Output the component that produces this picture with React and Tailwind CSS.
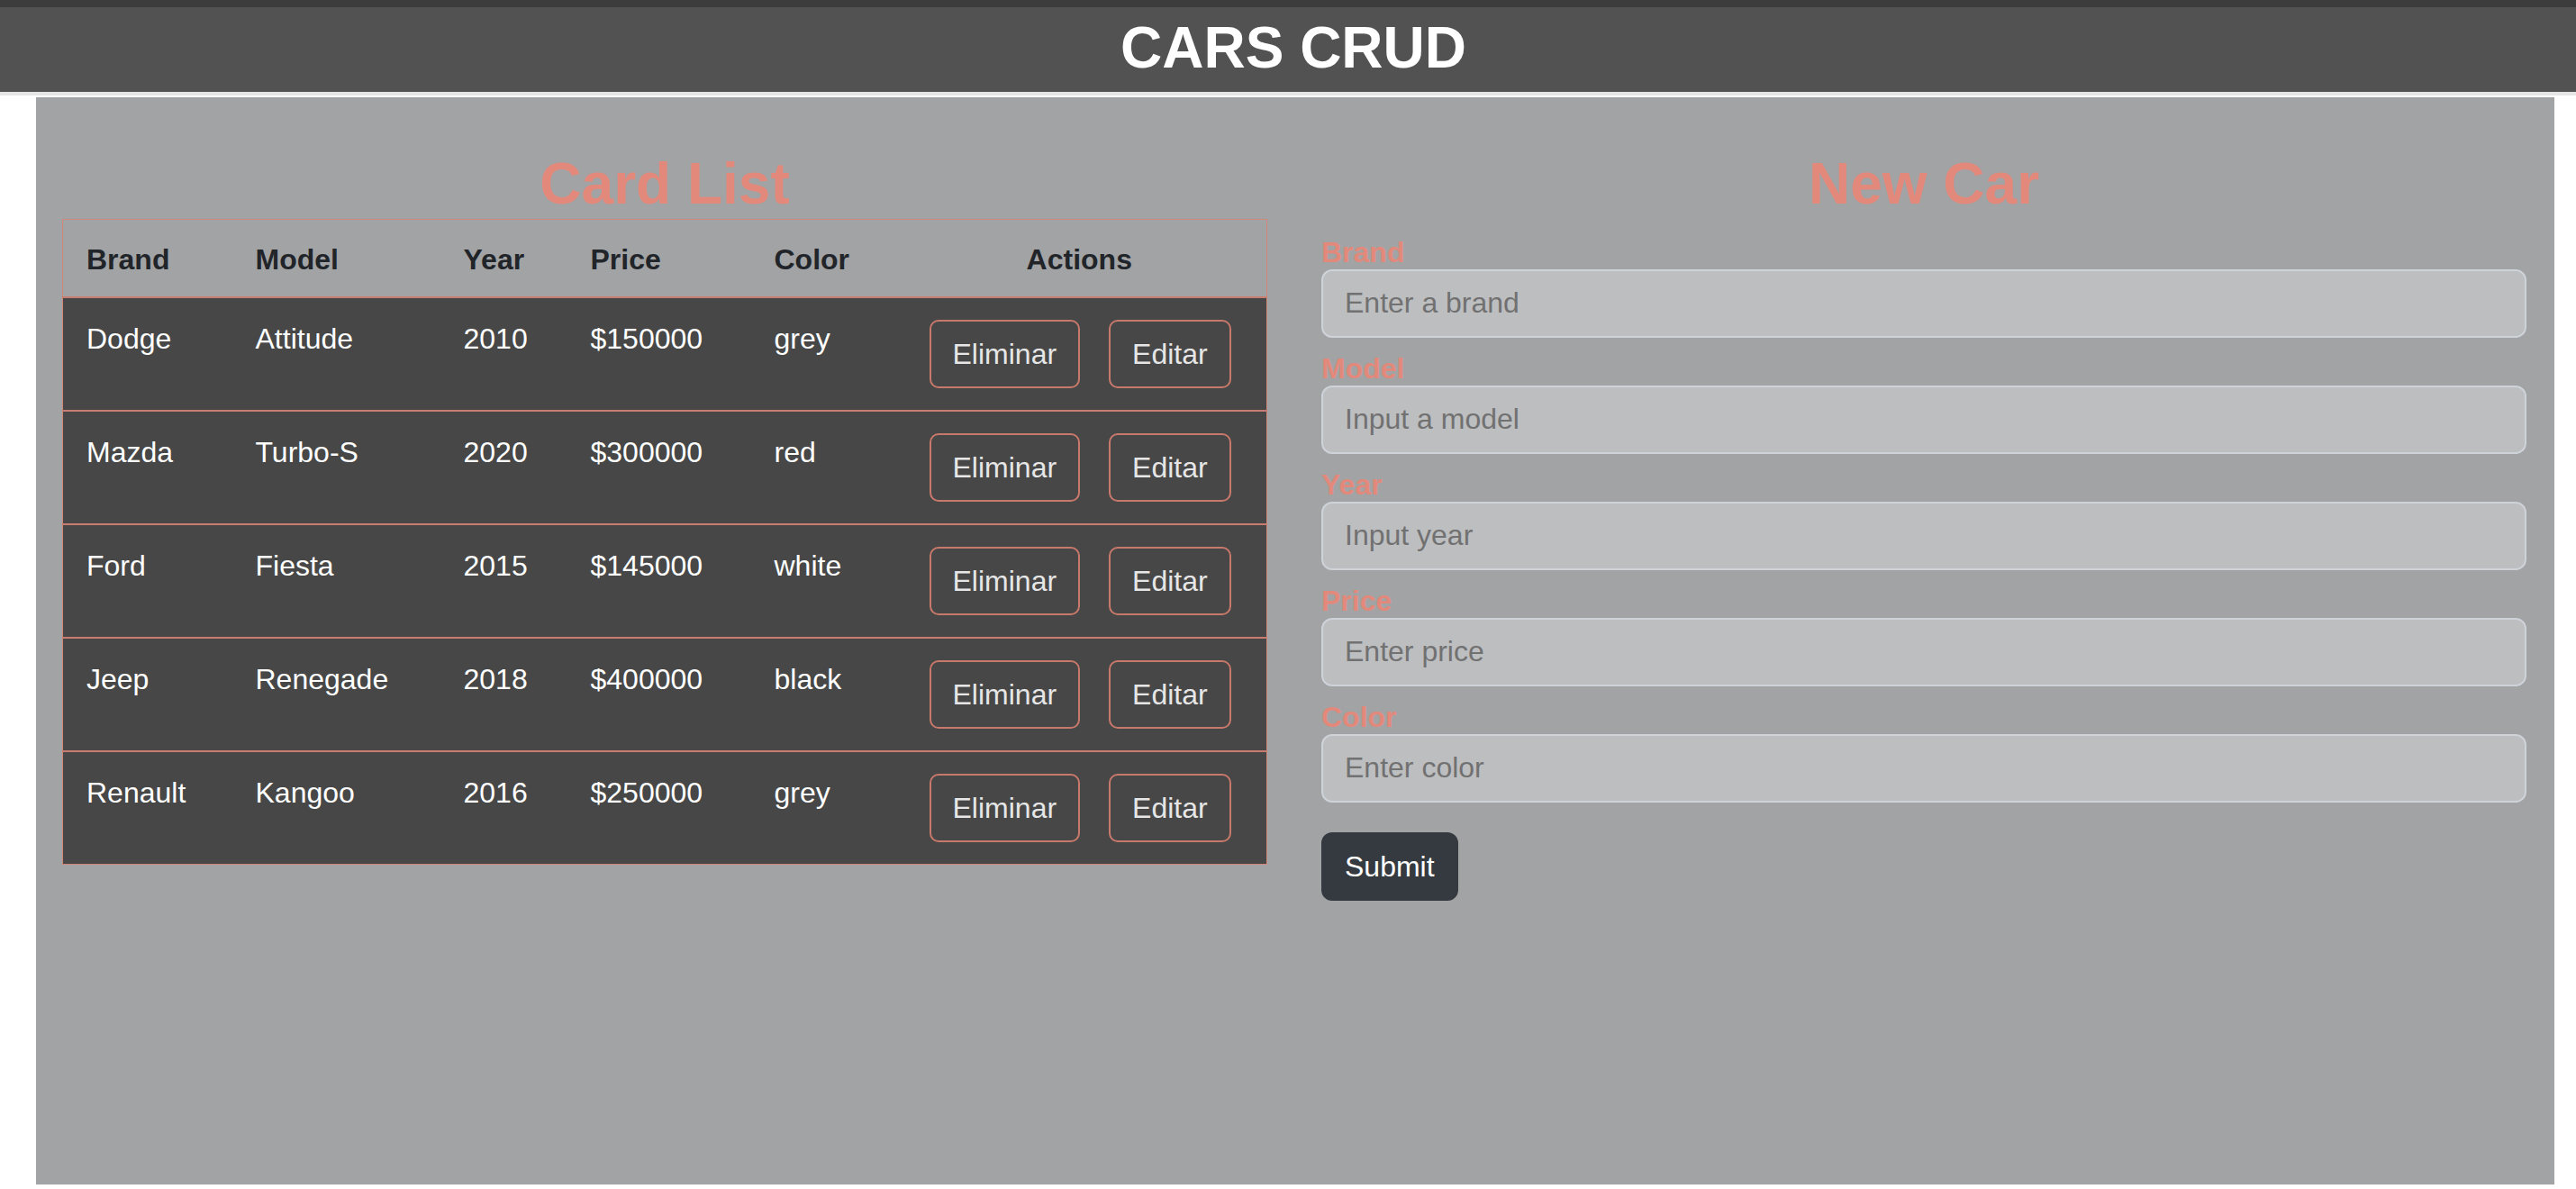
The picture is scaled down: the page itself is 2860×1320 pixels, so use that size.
const CARS = [
  { brand: 'Dodge', model: 'Attitude', year: 2010, price: 150000, color: 'grey' },
  { brand: 'Mazda', model: 'Turbo-S', year: 2020, price: 300000, color: 'red' },
  { brand: 'Ford', model: 'Fiesta', year: 2015, price: 145000, color: 'white' },
  { brand: 'Jeep', model: 'Renegade', year: 2018, price: 400000, color: 'black' },
  { brand: 'Renault', model: 'Kangoo', year: 2016, price: 250000, color: 'grey' },
];

const FIELDS = [
  { label: 'Brand', placeholder: 'Enter a brand' },
  { label: 'Model', placeholder: 'Input a model' },
  { label: 'Year', placeholder: 'Input year' },
  { label: 'Price', placeholder: 'Enter price' },
  { label: 'Color', placeholder: 'Enter color' },
];

const HEADERS = ['Brand', 'Model', 'Year', 'Price', 'Color'];

export default function App() {
  return (
    <div className="min-h-screen bg-white font-['Liberation_Sans',Arial,sans-serif]">
      {/* Header */}
      <header className="h-[102px] bg-[#525252] shadow-[inset_0_8px_0_#3c3c3c] flex items-center justify-center pt-[4px] pl-[12px]">
        <h1 className="text-[64px] font-bold text-white leading-none">CARS CRUD</h1>
      </header>
      <div className="h-[4px] bg-[#e6e6e6]" />

      {/* Panel */}
      <main className="mt-[2px] ml-[40px] w-[2796px] h-[1207px] bg-[#a2a3a5] pl-[29px] pr-[31px] pt-[58px]">
        <div className="grid grid-cols-2 gap-[60px]">
          {/* Card list */}
          <section>
            <h2 className="text-center text-[64px] font-bold leading-[1.2] text-[#e2897b]">Card List</h2>
            <table className="w-full table-fixed border-collapse border border-[#d2867a] text-[32px] leading-[48px]">
              <colgroup>
                <col className="w-[188px]" />
                <col className="w-[231px]" />
                <col className="w-[141px]" />
                <col className="w-[204px]" />
                <col className="w-[173px]" />
                <col />
              </colgroup>
              <thead>
                <tr className="border-b-2 border-[#c97c70]">
                  {HEADERS.map(h => (
                    <th key={h} className="text-left font-bold text-[#212529] pl-[26px] pt-[20px] pb-[17px]">{h}</th>
                  ))}
                  <th className="text-center font-bold text-[#212529] pl-[25px] pr-[41px] pt-[20px] pb-[17px]">Actions</th>
                </tr>
              </thead>
              <tbody className="bg-[#464746]">
                {CARS.map(c => (
                  <tr key={c.brand} className="border-b-2 border-[#c97c70] last:border-b-0">
                    <td className="align-top pl-[26px] pt-[21px] text-white">{c.brand}</td>
                    <td className="align-top pl-[26px] pt-[21px] text-white">{c.model}</td>
                    <td className="align-top pl-[26px] pt-[21px] text-white">{c.year}</td>
                    <td className="align-top pl-[26px] pt-[21px] text-white">${c.price}</td>
                    <td className="align-top pl-[26px] pt-[21px] text-white">{c.color}</td>
                    <td className="pl-[25px] py-[24px]">
                      <div className="flex gap-[32px]">
                        <button className="h-[76px] px-[24px] border-2 border-[#c8796b] rounded-[10px] text-[#e6e6e6] leading-[48px]">Eliminar</button>
                        <button className="h-[76px] px-[24px] border-2 border-[#c8796b] rounded-[10px] text-[#e6e6e6] leading-[48px]">Editar</button>
                      </div>
                    </td>
                  </tr>
                ))}
              </tbody>
            </table>
          </section>

          {/* New car form */}
          <section>
            <h2 className="text-center text-[64px] font-bold leading-[1.2] text-[#e2897b] mb-[19px]">New Car</h2>
            <form>
              {FIELDS.map(f => (
                <div key={f.label} className="mb-[16px]">
                  <label className="block text-[32px] font-bold leading-[37px] text-[#e2897b]">{f.label}</label>
                  <input
                    type="text"
                    placeholder={f.placeholder}
                    className="w-full h-[76px] px-[24px] rounded-[12px] border-2 border-[#cdd3d9] bg-[#bdbec0] text-[32px] text-[#212529] placeholder-[#717171] outline-none"
                  />
                </div>
              ))}
              <button type="button" className="mt-[17px] h-[76px] px-[24px] border-2 border-[#343a40] rounded-[12px] bg-[#343a40] text-white text-[32px]">Submit</button>
            </form>
          </section>
        </div>
      </main>
    </div>
  );
}
